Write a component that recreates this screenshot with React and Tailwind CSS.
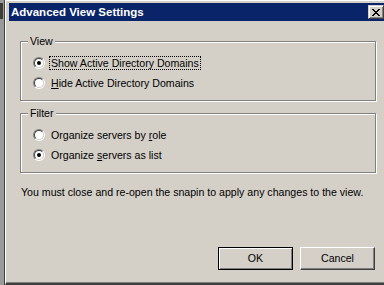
import React from "react";

const font = { fontFamily: '"Liberation Sans", Arial, sans-serif' };

function Radio({ checked }) {
  return (
    <span className="relative block w-[12px] h-[12px] shrink-0 rounded-full border border-t-[#808080] border-l-[#808080] border-r-white border-b-white">
      <span className="flex items-center justify-center w-full h-full rounded-full bg-white border border-t-[#404040] border-l-[#404040] border-r-[#d4d0c8] border-b-[#d4d0c8]">
        {checked && <span className="block w-[4px] h-[4px] rounded-full bg-black" />}
      </span>
    </span>
  );
}

function Row({ checked, focus, children }) {
  return (
    <div className="flex items-center h-[16px] gap-[4px]">
      <Radio checked={checked} />
      <span
        className={
          "flex items-center h-[14px] px-[1px] border " +
          (focus ? "border-dotted border-black" : "border-transparent")
        }
      >
        {children}
      </span>
    </div>
  );
}

function Group({ label, children, className = "" }) {
  return (
    <div
      className={
        "relative h-[60px] border border-[#808080] [box-shadow:inset_1px_1px_0_#ffffff,1px_1px_0_#ffffff] pl-[12px] pt-[13px] flex flex-col gap-[4px] " +
        className
      }
    >
      <span className="absolute left-[7px] top-[-7px] h-[13px] leading-[13px] px-[2px] bg-[#d4d0c8]">
        {label}
      </span>
      {children}
    </div>
  );
}

export default function App() {
  return (
    <div
      className="w-[384px] h-[285px] overflow-hidden bg-[#d4d0c8] flex text-[10.6px] leading-[13px] text-black"
      style={font}
    >
      <div className="w-[5px] shrink-0 bg-[#9a9a9a] border-r border-[#404040] flex flex-col">
        <div className="h-[3px]" />
        <div className="h-[16px] w-[3px] bg-[#3c3c34]" />
      </div>
      <div className="w-[385px] h-[285px] shrink-0 flex flex-col border-l border-t border-l-white border-t-white border-b-2 border-b-[#404040]">
        <div className="flex flex-col flex-1 pl-[3px] pt-[2px] pr-[3px] border-b border-[#808080]">
          <div className="h-[18px] bg-[#0a246a] flex items-center justify-between pl-[2px] pr-[3px]">
            <span className="text-white font-bold text-[11.5px]">Advanced View Settings</span>
            <span className="w-[16px] h-[14px] bg-[#d4d0c8] border border-t-[#d4d0c8] border-l-[#d4d0c8] border-r-[#404040] border-b-[#404040] [box-shadow:inset_1px_1px_0_#ffffff,inset_-1px_-1px_0_#808080] flex items-center justify-center">
              <svg width="8" height="7" viewBox="0 0 8 7" shapeRendering="crispEdges">
                <path
                  d="M0 0h2v1H0zM6 0h2v1H6zM1 1h2v1H1zM5 1h2v1H5zM2 2h4v1H2zM3 3h2v1H3zM2 4h4v1H2zM1 5h2v1H1zM5 5h2v1H5zM0 6h2v1H0zM6 6h2v1H6z"
                  fill="#000"
                />
              </svg>
            </span>
          </div>
          <div className="flex flex-col px-[11px] pt-[20px]">
            <Group label="View">
              <Row checked focus>
                Show Active Directory Domains
              </Row>
              <Row>
                <span>
                  <span className="underline">H</span>ide Active Directory Domains
                </span>
              </Row>
            </Group>
            <Group label="Filter" className="mt-[12px]">
              <Row>
                <span>
                  Organize servers by <span className="underline">r</span>ole
                </span>
              </Row>
              <Row checked>
                <span>
                  Organize <span className="underline">s</span>ervers as list
                </span>
              </Row>
            </Group>
            <p className="mt-[13px] pl-[1px] whitespace-nowrap">
              You must close and re-open the snapin to apply any changes to the view.
            </p>
            <div className="mt-[48px] flex gap-[7px] pl-[198px]">
              <button className="w-[75px] h-[23px] bg-[#d4d0c8] border border-black [box-shadow:inset_1px_1px_0_#ffffff,inset_-1px_-1px_0_#808080] flex items-center justify-center">
                OK
              </button>
              <button className="w-[75px] h-[23px] bg-[#d4d0c8] border border-t-white border-l-white border-r-[#404040] border-b-[#404040] [box-shadow:inset_-1px_-1px_0_#808080] flex items-center justify-center">
                Cancel
              </button>
            </div>
          </div>
        </div>
      </div>
    </div>
  );
}
